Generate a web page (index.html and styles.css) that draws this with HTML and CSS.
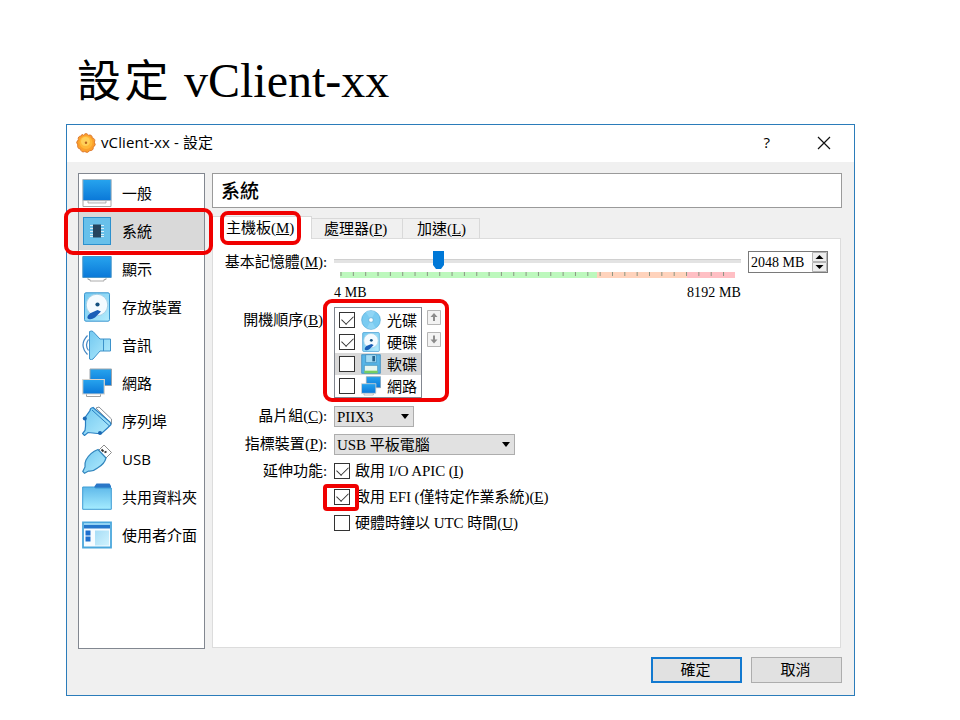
FILE: index.html
```html
<!DOCTYPE html>
<html lang="zh-Hant">
<head>
<meta charset="utf-8">
<title>vClient-xx - 設定</title>
<link rel="stylesheet" href="styles.css">
</head>
<body>
<svg class="defs" width="0" height="0" aria-hidden="true">
  <defs>
    <linearGradient id="screen" x1="0" y1="0" x2="0" y2="1"><stop offset="0" stop-color="#27a4ee"/><stop offset="1" stop-color="#0a78d8"/></linearGradient>
    <linearGradient id="light" x1="0" y1="0" x2="1" y2="1"><stop offset="0" stop-color="#72c8f0"/><stop offset="1" stop-color="#b4ecfd"/></linearGradient>
    <linearGradient id="folder" x1="0" y1="0" x2="0" y2="1"><stop offset="0" stop-color="#5fb9ea"/><stop offset="1" stop-color="#a5ecff"/></linearGradient>
    <symbol id="i-net" viewBox="0 0 30 30">
      <path d="M8 1h21.500v16.500H8z" fill="url(#screen)" stroke="#9aa4ac"/>
      <path d="M4.500 28.500v-3h14v3z" fill="#fff" stroke="#a0a0a0"/>
      <path d="M.7 11.500h21.600V26H.7z" fill="url(#screen)" stroke="#d9d5cf" stroke-width="1.200"/>
    </symbol>
    <symbol id="i-disk" viewBox="0 0 30 30">
      <rect x="2.500" y=".8" width="25" height="28.400" rx="1.500" fill="url(#light)" stroke="#3a96cf"/>
      <circle cx="15" cy="13" r="10.800" fill="#f4fbff" stroke="#a2cfe6"/>
      <circle cx="15.500" cy="12.500" r="2.100" fill="#14507f"/>
      <path d="M15.500 18l3.500 1.500-6 6q-3.500 2.500-6.500 1.500-2-1-.5-3.500 2-3 5-3.500z" fill="#1b5fb8"/>
    </symbol>
  </defs>
</svg>

<h1 class="slide-title"><span class="slide-title-cjk">設定</span> vClient-xx</h1>

<section class="dialog">
  <header class="titlebar">
    <svg class="app-icon" viewBox="0 0 20 20"><path d="M7.600 2.200Q10-1 12.400 2.200q3.800-.9 3.800 2.600 3.700 1 2.200 4.400 2.200 3-1.100 4.900.2 3.800-3.500 3.500-2.200 3.200-5 1-3.700 1.200-4.300-2.500-3.700-.7-2.700-4.200-2.600-2.700.5-5.100-.7-3.700 3-3.800Q5.400 .5 7.600 2.200Z" fill="#fba02c" stroke="#d9742a" stroke-width=".9"/><circle cx="10" cy="9.500" r="6.500" fill="#ffb838"/><circle cx="9.500" cy="8.500" r="4.500" fill="#ffd05a"/><circle cx="10" cy="9.800" r="1.200" fill="#b8641c"/></svg>
    <span class="titlebar-text">vClient-xx - 設定</span>
    <span class="help">?</span>
    <svg class="close" viewBox="0 0 14 14"><path d="M1 1l12 12M13 1L1 13" stroke="#111" stroke-width="1.200"/></svg>
  </header>

  <div class="body">
    <nav class="sidebar">
      <div class="item"><svg viewBox="0 0 30 30"><path d="M1 22.500h28V28.500H1z" fill="#fff" stroke="#a8a8a8"/><path d="M6 23v2h18v-2" fill="#f2f2f2" stroke="#9a9a9a" stroke-width=".7"/><path d="M.8 1.500h28.400v21H.8z" fill="url(#screen)" stroke="#a9b4bc"/></svg><span>一般</span></div>
      <div class="item selected"><svg viewBox="0 0 30 30"><rect x="1.500" y="1.500" width="27" height="27" fill="#68c0ea" stroke="#2c90cd"/><path d="M8 9.500h14M8 12.500h14M8 15.500h14M8 18.500h14M8 20.500h14" stroke="#d9eff8" stroke-width="1"/><path d="M11 8.500h8v13h-8z" fill="#25445e"/></svg><span>系統</span></div>
      <div class="item"><svg viewBox="0 0 30 30"><path d="M6 23.500h18v2H22v1.500H8v-1.500H6z" fill="#fff" stroke="#989898" stroke-width=".8"/><path d="M.8 2.500h28.400v21H.8z" fill="url(#screen)" stroke="#4795c9"/></svg><span>顯示</span></div>
      <div class="item"><svg viewBox="0 0 30 30"><use href="#i-disk"/></svg><span>存放裝置</span></div>
      <div class="item"><svg viewBox="0 0 30 30"><path d="M7.500 1.500q2-1 3.500 0l7 7.500h10.500v12H18l-7 8q-1.500 1.500-3.500 0Z" fill="url(#light)" stroke="#3d92ca"/><path d="M21.500 9v12" stroke="#3d92ca"/><path d="M5.500 5.500Q-3.500 15 5.500 24.500M6.500 9.500q-4 5.500 0 11" fill="none" stroke="#4386c3" stroke-width="1.200"/></svg><span>音訊</span></div>
      <div class="item"><svg viewBox="0 0 30 30"><use href="#i-net"/></svg><span>網路</span></div>
      <div class="item"><svg viewBox="0 0 30 30"><path d="M14 2l3-1 12.500 12v5z" fill="#fff" stroke="#8c9298"/><path d="M11 1.500q-3 .5-3 3L3.500 11v9l-.5 4.500-2.500 3 2 2 3.500-3 9.500 1h4l6-5.500 3.500-3.500-1-2.500Z" fill="url(#light)" stroke="#287fc2" stroke-width="1.200"/><path d="M10 4l17 15.500" stroke="#287fc2"/><circle cx="2.800" cy="12.500" r="2" fill="#1c68b3"/><circle cx="18" cy="27" r="2" fill="#1c68b3"/></svg><span>序列埠</span></div>
      <div class="item"><svg viewBox="0 0 30 30"><path d="M16 7l6-6 7.500 7.500-6 6z" fill="#fff" stroke="#8c8c8c"/><path d="M19.500 5.500l2 2M22.500 8.500l2-1" stroke="#333" stroke-width="1.800"/><path d="M16 5.500q-8 3-12 10.500-1.500 3-1 7L.8 27.500l1.700 1.700L6.500 27q5 .5 9-3 7-4 8.500-10Z" fill="url(#light)" stroke="#3185bd" stroke-width="1.200"/></svg><span>USB</span></div>
      <div class="item"><svg viewBox="0 0 30 30"><path d="M12 5l2.500-3.500h13L29 4v5H12z" fill="#2a77c7"/><path d="M.7 5h11l2 1h15.600V27.300H.7z" fill="url(#folder)" stroke="#3d9cd4" stroke-width="1"/></svg><span>共用資料夾</span></div>
      <div class="item"><svg viewBox="0 0 30 30"><path d="M1 2.500h28v25H1z" fill="#f7fcff" stroke="#4aa7dc" stroke-width="1.800"/><path d="M2 5h26v3.500H2z" fill="#2476cb"/><path d="M2 3h26v2H2z" fill="#93d3f3"/><path d="M3.500 10.500h5v5h-5zM3.500 16.500h5v5h-5z" fill="#1e70ce"/><path d="M13 10.500h14v15H13z" fill="url(#light)" opacity=".6"/></svg><span>使用者介面</span></div>
      <i class="mark mark-sidebar"></i>
    </nav>

    <main class="content">
      <h2 class="page-name">系統</h2>
      <div class="tabs">
        <div class="tab active">主機板<span class="lat">(<u>M</u>)</span><i class="mark mark-tab"></i></div>
        <div class="tab tab-cpu">處理器<span class="lat">(<u>P</u>)</span></div>
        <div class="tab tab-accel">加速<span class="lat">(<u>L</u>)</span></div>
      </div>
      <div class="pane">
        <div class="label label-memory">基本記憶體<span class="lat">(<u>M</u>):</span></div>
        <div class="memory">
          <div class="slider">
            <svg class="slider-art" viewBox="0 0 407 32">
              <path d="M0 10h407v4H0z" fill="#e3e3e3"/><path d="M0 10.500h407" stroke="#d0d0d0"/>
              <path d="M6 23h257v6H6z" fill="#bdf8bd"/><path d="M263 23h90v6h-90z" fill="#ffd3bc"/><path d="M353 23h48v6h-48z" fill="#ffbfc4"/>
              <path d="M6.500 25h389" stroke="#8b9684" stroke-width="4" stroke-dasharray="1 11.340"/>
              <path d="M99 2h11v14l-3 4h-5l-3-4z" fill="#0078d7"/>
            </svg>
            <div class="scale"><span>4 MB</span><span>8192 MB</span></div>
          </div>
          <div class="spin"><span>2048 MB</span><svg viewBox="0 0 15 20"><path d="M.5.500h14v9H.5zM.5 10.500h14v9H.5z" fill="#eee" stroke="#b4b4b4"/><path d="M3.500 7h8L7.500 3zM3.500 13h8l-4 4z" fill="#000"/></svg></div>
        </div>

        <div class="label label-boot">開機順序<span class="lat">(<u>B</u>)</span></div>
        <div class="boot">
          <div class="boot-list">
            <div class="boot-row"><i class="box on"></i><svg viewBox="0 0 30 30"><circle cx="15" cy="15" r="14" fill="#79cbf1" stroke="#4ba4d4"/><path d="M15 15L7 3q8-4 14 0zM15 15l7 12q-7 3-13 0z" fill="#8fd5f5"/><circle cx="15" cy="15" r="3.500" fill="#fff" stroke="#5ca6ce"/></svg><span>光碟</span></div>
            <div class="boot-row"><i class="box on"></i><svg viewBox="0 0 30 30"><use href="#i-disk"/></svg><span>硬碟</span></div>
            <div class="boot-row current"><i class="box"></i><svg viewBox="0 0 30 30"><path d="M1 1h28v28H1z" fill="#57b5e7" stroke="#2581ba"/><path d="M7 1h16v12H7z" fill="#a4dbf3" stroke="#3288b9"/><path d="M17 3h4v8h-4z" fill="#24618b"/><path d="M5 17h20v12H5z" fill="#e8f6f1" stroke="#3389b6"/><path d="M5 25h20v4H5z" fill="#74ce62"/></svg><span>軟碟</span></div>
            <div class="boot-row"><i class="box"></i><svg viewBox="0 0 30 30"><use href="#i-net"/></svg><span>網路</span></div>
          </div>
          <div class="movers">
            <svg viewBox="0 0 14 15"><path d="M.5.500h13v14H.5z" fill="#f3f3f3" stroke="#b5b5b5"/><path d="M7 3l3.500 4H8v4H6V7H3.500z" fill="#8c8c8c"/></svg>
            <svg viewBox="0 0 14 15"><path d="M.5.500h13v14H.5z" fill="#f3f3f3" stroke="#b5b5b5"/><path d="M7 11.500l3.500-4H8v-4H6v4H3.500z" fill="#8c8c8c"/></svg>
          </div>
          <i class="mark mark-boot"></i>
        </div>

        <div class="label">晶片組<span class="lat">(<u>C</u>):</span></div>
        <div class="select select-chip"><span class="lat">PIIX3</span><i class="caret"></i></div>

        <div class="label">指標裝置<span class="lat">(<u>P</u>):</span></div>
        <div class="select select-pointer"><span><span class="lat">USB</span> 平板電腦</span><i class="caret"></i></div>

        <div class="label label-ext">延伸功能<span class="lat">:</span></div>
        <div class="check"><i class="box on"></i><span>啟用 <span class="lat">I/O APIC (<u>I</u>)</span></span></div>
        <div class="check check-efi"><i class="box on"></i><span>啟用 <span class="lat">EFI (</span>僅特定作業系統<span class="lat">)(<u>E</u>)</span></span><i class="mark mark-efi"></i></div>
        <div class="check check-utc"><i class="box"></i><span>硬體時鐘以 <span class="lat">UTC</span> 時間<span class="lat">(<u>U</u>)</span></span></div>
      </div>
    </main>
  </div>

  <footer class="actions">
    <div class="button primary">確定</div>
    <div class="button">取消</div>
  </footer>
</section>
</body>
</html>
```
FILE: styles.css
```css
* { box-sizing: border-box; }
body {
  margin: 0;
  width: 960px;
  height: 720px;
  overflow: hidden;
  background: #fff;
  color: #000;
  font: 400 15px/20px "Liberation Serif", "Noto Sans CJK TC", serif;
}
svg { display: block; flex: none; }
.defs { position: absolute; }
.slide-title {
  margin: 0;
  height: 124px;
  padding: 53px 0 0 77px;
  font: 400 48px/56px "Liberation Serif", "Noto Sans CJK TC", serif;
  white-space: pre;
}
.slide-title-cjk { font-size: 44px; letter-spacing: 3.500px; }

.dialog {
  width: 789px;
  height: 572px;
  margin-left: 66px;
  border: 1px solid #2b7cba;
  background: #f0f0f0;
}
.titlebar {
  display: flex;
  align-items: center;
  height: 37px;
  padding: 0 23px 0 9px;
  background: #fff;
  font: 400 15px/20px "Open Sans", "Noto Sans CJK TC", sans-serif;
}
.app-icon { width: 20px; height: 20px; margin: -1px 5px 0 0; }
.titlebar-text { flex: 1; margin-top: -4px; letter-spacing: .1px; }
.help { margin: -4px 47px 0 0; }
.close { width: 14px; height: 14px; margin-top: -1px; }

.body { display: flex; gap: 7px; padding: 11px 12px 0 11px; height: 487px; }
.sidebar {
  position: relative;
  width: 127px;
  height: 476px;
  border: 1px solid #828790;
  background: #fff;
  font-family: "Open Sans", "Noto Sans CJK TC", sans-serif;
}
.item {
  display: flex;
  align-items: center;
  gap: 10px;
  height: 38px;
  padding-left: 3px;
  white-space: nowrap;
}
.item svg { width: 30px; height: 30px; }
.item span { padding-bottom: 1px; }
.selected { background: #d9d9d9; }

.content { width: 630px; }
.page-name {
  margin: 0 0 8px;
  height: 35px;
  padding: 5px 8px;
  border: 1px solid #9a9a9a;
  background: #fff;
  font: 500 19px/22px "Noto Sans CJK TC", sans-serif;
}
.tabs { display: flex; align-items: flex-end; height: 22px; }
.tab {
  height: 20px;
  padding-left: 14px;
  border: 1px solid #d9d9d9;
  border-width: 1px 1px 0 0;
  line-height: 20px;
  white-space: nowrap;
}
.tab.active {
  position: relative;
  width: 100px;
  height: 23px;
  margin-bottom: -1px;
  background: #fff;
  line-height: 22px;
  z-index: 1;
}
.tab-cpu { width: 91px; padding-left: 12px; }
.tab-accel { width: 77px; }
.lat { letter-spacing: -.1px; }
u { text-underline-offset: 1px; text-decoration-thickness: 1px; }

.pane {
  display: grid;
  grid-template-columns: 114px 1fr;
  grid-template-rows: 59px 98px 28px 24px 26px 26px 26px;
  column-gap: 7px;
  align-items: start;
  width: 629px;
  height: 410px;
  padding-top: 10px;
  border: 1px solid #dcdcdc;
  background: #fff;
}
.label { text-align: right; white-space: nowrap; }
.label-memory { padding-top: 3px; }
.label-boot { padding: 2px 4px 0 0; }
.label-ext { padding-top: 3px; }
.memory { display: flex; gap: 7px; }
.slider { width: 407px; }
.slider-art { width: 407px; height: 32px; }
.scale { display: flex; justify-content: space-between; padding-top: 2px; font-size: 14px; letter-spacing: .1px; }
.spin {
  display: flex;
  justify-content: space-between;
  width: 80px;
  height: 22px;
  margin-top: 2px;
  padding-left: 2px;
  border: 1px solid #7a7a7a;
  font-size: 14px;
  line-height: 22px;
}
.spin svg { width: 15px; height: 20px; }

.boot { position: relative; display: flex; gap: 5px; }
.boot-list {
  width: 88px;
  height: 91px;
  margin-top: -1px;
  padding-top: 1px;
  border: 1px solid #828790;
}
.boot-row { display: flex; align-items: center; height: 22px; padding-left: 4px; font-family: "Noto Sans CJK TC", sans-serif; }
.boot-row svg { width: 20px; height: 20px; margin: 0 6px 0 6px; }
.current { background: #d9d9d9; }
.movers { display: flex; flex-direction: column; gap: 7px; padding-top: 2px; }
.movers svg { width: 14px; height: 15px; }

.box { position: relative; flex: none; width: 16px; height: 16px; border: 1px solid #333; background: #fff; }
.box.on::after {
  content: "";
  position: absolute;
  left: 2px;
  top: 2px;
  width: 10px;
  height: 6px;
  border: solid #333;
  border-width: 0 0 1.500px 1.500px;
  transform: rotate(-45deg);
}
.select {
  display: flex;
  justify-content: space-between;
  align-items: center;
  height: 21px;
  padding: 0 4px 0 2px;
  border: 1px solid #adadad;
  background: #e1e1e1;
}
.select-chip { width: 80px; }
.select-pointer { width: 181px; }
.caret { border: 4px solid transparent; border-top: 5px solid #000; border-bottom: 0; }
.check { display: flex; align-items: center; gap: 5px; height: 26px; grid-column: 2; white-space: nowrap; }
.check-efi { position: relative; }

.mark { position: absolute; border: 4px solid #f00000; border-radius: 8px; z-index: 2; }
.mark-sidebar { left: -15px; top: 34px; width: 149px; height: 47px; border-radius: 9px; }
.mark-tab { left: 8px; top: -6px; width: 81px; height: 34px; }
.mark-boot { left: -11px; top: -9px; width: 126px; height: 103px; border-radius: 9px; }
.mark-efi { left: -11px; top: 0; width: 36px; height: 27px; border-radius: 4px; }

.actions { display: flex; justify-content: flex-end; gap: 9px; padding: 8px 12px 0 0; }
.button {
  width: 91px;
  height: 26px;
  padding-right: 2px;
  border: 1px solid #adadad;
  background: #e1e1e1;
  line-height: 24px;
  text-align: center;
}
.primary { border: 2px solid #1279d0; line-height: 22px; }
```
